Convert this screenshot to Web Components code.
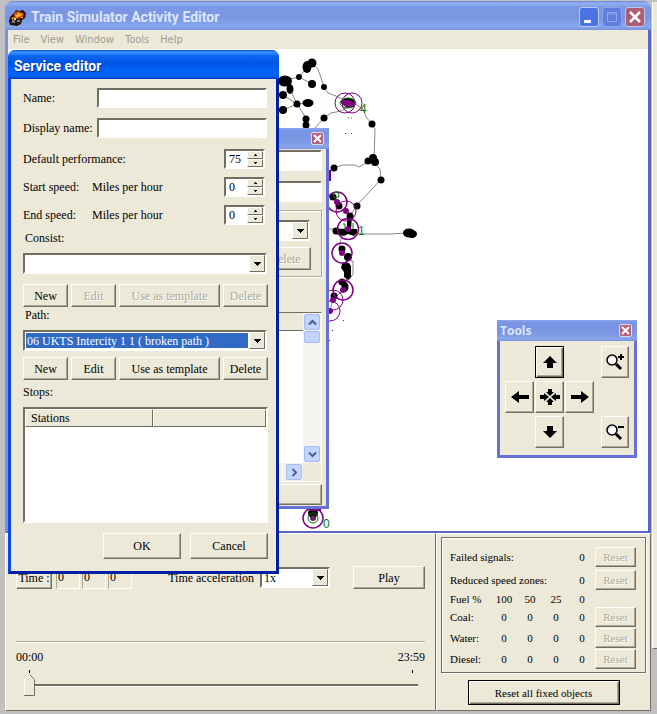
<!DOCTYPE html>
<html lang="en">
<head>
<meta charset="utf-8">
<title>Train Simulator Activity Editor</title>
<style>
html,body{margin:0;height:100%}
body{background:#c0c0c0;font:12px/14px "Liberation Serif",serif;color:#000;overflow:hidden;
 --face:#ece9d8;--shade:#716f64;--mid:#aca899;--blue:#316ac5}
</style>
</head>
<body>
<editor-desktop></editor-desktop>
<script>
const define = (name, html, setup) => customElements.define(name, class extends HTMLElement {
  constructor() {
    super();
    const t = document.createElement('template');
    t.innerHTML = typeof html === 'function' ? html(this) : html;
    this.attachShadow({mode: 'open'}).appendChild(t.content.cloneNode(true));
    if (setup) setup(this, this.shadowRoot);
  }
});

/* Push button */
define('xp-button', el => `
<style>
:host{display:block}
button{box-sizing:border-box;width:100%;height:100%;margin:0;padding:0;font:inherit;color:inherit;background:var(--face);
 border:1px solid;border-color:#fff var(--shade) var(--shade) #fff;box-shadow:inset -1px -1px var(--mid);border-radius:0;
 display:flex;align-items:center;justify-content:center;white-space:nowrap}
button:disabled{color:var(--mid);text-shadow:1px 1px #fff}
:host([default]) button{border-color:#000;box-shadow:inset 1px 1px #fff,inset -1px -1px var(--shade),inset -2px -2px var(--mid)}
</style>
<button type="button" ${el.hasAttribute('disabled') ? 'disabled' : ''} ${el.hasAttribute('label') ? `aria-label="${el.getAttribute('label')}"` : ''}><slot></slot></button>`);

/* Labelled text box */
define('xp-field', el => `
<style>
:host{display:flex;align-items:center;height:20px}
label{flex:0 0 74px;white-space:nowrap}
:host([bare]) label{display:none}
input{box-sizing:border-box;flex:1;min-width:0;height:100%;margin:0;padding:0 3px;font:inherit;background:#fff;border-radius:0;outline:0;
 border:2px solid;border-color:var(--shade) #fff #fff var(--shade)}
</style>
<label for="i">${el.getAttribute('label')}</label><input id="i" type="text" aria-label="${el.getAttribute('label')}">`);

/* Labelled number box with up and down buttons */
define('xp-spin', el => `
<style>
:host{display:flex;align-items:center;height:20px}
label{flex:0 0 69px;white-space:nowrap}
.unit{flex:1;white-space:nowrap}
.box{box-sizing:border-box;width:41px;height:20px;margin-right:3px;display:flex;background:#fff;border:2px solid;border-color:var(--shade) #fff #fff var(--shade)}
input{appearance:textfield;flex:1;min-width:0;margin:0;padding:0 0 0 3px;border:0;outline:0;font:inherit;background:none}
input::-webkit-inner-spin-button{appearance:none;margin:0}
.arrows{width:16px;display:grid;grid-template-rows:1fr 1fr}
button{margin:0;padding:0;min-height:0;background:var(--face);border:1px solid;border-color:#fff var(--shade) var(--shade) #fff;border-radius:0;display:flex;align-items:center;justify-content:center}
svg{display:block;width:3px;height:2px}
</style>
<label for="i">${el.getAttribute('label')}</label><span class="unit">${el.getAttribute('unit') || ''}</span>
<span class="box"><input id="i" type="number" value="${el.getAttribute('value')}"><span class="arrows">
<button type="button" aria-label="Increase"><svg viewBox="0 0 3 2"><path d="M1 0h1v1h1v1H0V1h1z"/></svg></button>
<button type="button" aria-label="Decrease"><svg viewBox="0 0 3 2"><path d="M0 0h3v1H2v1H1V1H0z"/></svg></button></span></span>`,
(el, root) => {
  const input = root.querySelector('input'), [up, down] = root.querySelectorAll('button');
  up.onclick = () => input.stepUp();
  down.onclick = () => input.stepDown();
});

/* Drop-down list */
define('xp-select', el => `
<style>
:host{display:block}
:host([inline]){display:flex;align-items:center}
label{display:flex;align-items:center;box-sizing:border-box;white-space:nowrap}
:host([inline]) label{padding-right:6px}
:host([bare]) label{display:none}
.box{box-sizing:border-box;height:21px;display:flex;background:#fff;border:2px solid;border-color:var(--shade) #fff #fff var(--shade)}
:host([inline]) .box{width:70px}
select{appearance:none;flex:1;min-width:0;margin:1px;padding:0 1px;border:0;outline:0;border-radius:0;font:inherit;color:inherit;background:#fff}
:host([picked]) select{background:var(--blue);color:#fff}
.drop{box-sizing:border-box;width:16px;pointer-events:none;background:var(--face);border:1px solid;border-color:#fff var(--shade) var(--shade) #fff;display:flex;align-items:center;justify-content:center}
</style>
<label part="label" for="s">${el.getAttribute('label')}</label>
<div class="box"><select id="s" aria-label="${el.getAttribute('label')}"><option>${el.getAttribute('value') || ''}</option></select><span class="drop"><svg width="7" height="4" viewBox="0 0 7 4"><path d="M0 0h7v1H6v1H5v1H4v1H3V3H2V2H1V1H0z"/></svg></span></div>`);

/* Framed window with a title bar */
define('xp-window', el => `
<style>
:host{display:flex;flex-direction:column;box-sizing:border-box;border:3px solid #6570d8;border-top:0;background:var(--face);--bar:linear-gradient(#8ba4ec,#7894e4 15%,#7b96e2 60%,#86a6ec 90%,#7d90dc)}
:host([active]){border-color:#0a43e4 #001fa4 #001fa4 #0844e8;border-radius:8px 8px 0 0;--bar:linear-gradient(#0b54c8,#3d95ff 8%,#0a67f2 20%,#0054e3 45%,#0062f8 70%,#0361f0 90%,#0140c8)}
header{flex:none;box-sizing:border-box;height:21px;margin:0 -3px;padding:0 5px 0 3px;display:flex;align-items:center;background:var(--bar);color:#dce6fa;font:bold 12px/14px "Open Sans",sans-serif}
:host([active]) header{height:29px;padding:3px 6px 0;border-radius:7px 7px 0 0;color:#fff;font:bold 14px/18px Roboto,sans-serif;text-shadow:1px 1px #0a2a88}
span{flex:1;white-space:nowrap}
button{width:13px;height:13px;padding:0;border:1px solid #e0d8f0;border-radius:2px;background:#b4627a;display:flex;align-items:center;justify-content:center}
:host([active]) button{display:none}
main{flex:1;min-height:0;display:flex;flex-direction:column}
</style>
<header><span>${el.getAttribute('title-text') || ''}</span><button type="button" aria-label="Close"><svg width="9" height="9" viewBox="0 0 9 9"><path d="M1 1l7 7M8 1L1 8" stroke="#fff" stroke-width="2"/></svg></button></header>
<main><slot></slot></main>`);

/* Service editor form */
define('service-editor', `
<style>
:host{display:block;padding:9px 8px 12px 12px}
xp-field{margin-right:1px;margin-bottom:10px}
xp-spin{margin-bottom:8px}
.gap{margin-top:11px}
.last{margin-bottom:0}
.pick{margin-right:1px}
.pick::part(label){height:23px;padding:0 0 7px 2px}
.consist::part(label){height:28px;padding-bottom:2px}
.row{display:grid;grid-template-columns:45px 45px 1fr 45px;grid-auto-rows:23px;gap:3px}
.row.a{margin-top:10px}.row.b{margin-top:6px}
h2{margin:0;height:27px;font:inherit;line-height:25px}
.list{box-sizing:border-box;height:116px;background:#fff;border:2px solid;border-color:var(--shade) #fff #fff var(--shade)}
table{width:100%;border-collapse:separate;border-spacing:0}
th{box-sizing:border-box;height:18px;padding:0 5px;font-weight:normal;text-align:left;background:var(--face);border:1px solid;border-color:#fff var(--shade) var(--shade) #fff}
th:first-child{width:128px}
.end{display:flex;justify-content:flex-end;gap:9px;margin-top:10px}
.end xp-button{width:78px;height:26px}
</style>
<xp-field label="Name:"></xp-field>
<xp-field label="Display name:"></xp-field>
<xp-spin class="gap" label="Default performance:" value="75"></xp-spin>
<xp-spin label="Start speed:" unit="Miles per hour" value="0"></xp-spin>
<xp-spin class="last" label="End speed:" unit="Miles per hour" value="0"></xp-spin>
<xp-select class="pick consist" label="Consist:"></xp-select>
<div class="row a"><xp-button>New</xp-button><xp-button disabled>Edit</xp-button><xp-button disabled>Use as template</xp-button><xp-button disabled>Delete</xp-button></div>
<xp-select class="pick" picked label="Path:" value="06 UKTS Intercity 1 1 ( broken path )"></xp-select>
<div class="row b"><xp-button>New</xp-button><xp-button>Edit</xp-button><xp-button>Use as template</xp-button><xp-button>Delete</xp-button></div>
<h2>Stops:</h2>
<div class="list"><table><thead><tr><th>Stations</th><th></th></tr></thead></table></div>
<div class="end"><xp-button>OK</xp-button><xp-button>Cancel</xp-button></div>`);

/* Dialog that lies behind the service editor */
define('back-form', `
<style>
:host{flex:1;display:flex;flex-direction:column;padding:1px 4px 1px 8px}
xp-field{height:21px;margin-bottom:10px}
.group{box-sizing:border-box;height:67px;margin-top:-2px;padding:9px 10px 0 8px;border:1px solid var(--mid);box-shadow:1px 1px #fff,inset 1px 1px #fff}
.group xp-button{width:52px;height:23px;margin:6px 0 0 auto}
.group xp-select{margin-right:1px}
.list{box-sizing:border-box;flex:1;margin-top:35px;display:grid;grid-template:18px 1fr 18px/1fr 18px;background:#fff;border:1px solid;border-color:var(--shade) #fff #fff var(--shade)}
.head{background:var(--face);border-bottom:1px solid var(--shade)}
.v{grid-area:1/2/3/3;background:#f4f3ee;display:flex;flex-direction:column;padding:1px}
.v i{height:10px;margin-top:1px;border:1px solid #a4bcf4;border-radius:2px;background:#c4d5fd}
.v button:last-child{margin-top:auto}
.h{grid-area:3/1;background:#f4f3ee;display:flex;justify-content:flex-end;padding:1px}
.c{grid-area:3/2;background:var(--face)}
.list button{box-sizing:border-box;flex:none;width:16px;height:16px;padding:0;border:1px solid #a4bcf4;border-radius:2px;background:#c4d5fd;display:flex;align-items:center;justify-content:center}
path{fill:none;stroke:#4d6185;stroke-width:2}
.foot{height:21px;margin-top:2px}
</style>
<xp-field bare label="Activity name"></xp-field><xp-field bare label="Activity title"></xp-field>
<div class="group"><xp-select bare label="Service"></xp-select><xp-button disabled>Delete</xp-button></div>
<div class="list"><div class="head"></div>
<div class="v"><button type="button" aria-label="Scroll up"><svg width="9" height="7"><path d="M1 5.500l3.500-3.500L8 5.500"/></svg></button><i></i><button type="button" aria-label="Scroll down"><svg width="9" height="7"><path d="M1 1.500L4.500 5 8 1.500"/></svg></button></div>
<div></div><div class="h"><button type="button" aria-label="Scroll right"><svg width="7" height="9"><path d="M1.500 1L5 4.500 1.500 8"/></svg></button></div><div class="c"></div></div>
<xp-button class="foot"></xp-button>`);

/* Map navigation tools */
define('nav-tools', `
<style>
:host{display:grid;grid-template-columns:29px 29px 29px 1fr 28px;grid-auto-rows:32px;gap:3px 1px;padding:5px 5px 7px}
</style>
<xp-button default label="Up" style="grid-area:1/2"><svg width="16" height="16"><path d="M8 2l7 7h-4v5H5V9H1z"/></svg></xp-button>
<xp-button label="Zoom in" style="grid-area:1/5"><svg width="20" height="20"><circle cx="7" cy="8" r="5" fill="#fff" stroke="#000" stroke-width="1.500"/><path d="M4 7a3 3 0 013-3" fill="none" stroke="#bbb"/><path d="M11 12l5 5" stroke="#000" stroke-width="3"/><path d="M13 5h6M16 2v6" stroke="#000" stroke-width="2"/></svg></xp-button>
<xp-button label="Left" style="grid-area:2/1"><svg width="20" height="14"><path d="M1 7l8-6v4h10v4H9v4z"/></svg></xp-button>
<xp-button label="Centre" style="grid-area:2/2"><svg width="22" height="18"><path d="M9 1h4v3h2l-4 4-4-4h2zM9 17h4v-3h2l-4-4-4 4h2zM1 7h4V5l5 4-5 4v-2H1zM21 7h-4V5l-5 4 5 4v-2h4z"/></svg></xp-button>
<xp-button label="Right" style="grid-area:2/3"><svg width="20" height="14"><path d="M19 7l-8-6v4H1v4h10v4z"/></svg></xp-button>
<xp-button label="Down" style="grid-area:3/2"><svg width="16" height="16"><path d="M8 14l7-7h-4V2H5v5H1z"/></svg></xp-button>
<xp-button label="Zoom out" style="grid-area:3/5"><svg width="20" height="20"><circle cx="7" cy="8" r="5" fill="#fff" stroke="#000" stroke-width="1.500"/><path d="M4 7a3 3 0 013-3" fill="none" stroke="#bbb"/><path d="M11 12l5 5" stroke="#000" stroke-width="3"/><path d="M13 5h6" stroke="#000" stroke-width="2"/></svg></xp-button>`);

/* Route map; nodes are placed by their coordinates on the canvas */
define('route-map', `
<style>
:host{display:block;position:relative;background:#fff;overflow:hidden}
svg{position:absolute;left:262px;top:1px}
.l{fill:none;stroke:#888}
.r{fill:none;stroke:#800080}
.w{stroke-width:1.500}
.g{fill:none;stroke:#008000}
text{font:12px "Liberation Sans",sans-serif;fill:#008000}
.p{fill:#800080}
</style>
<svg width="160" height="480" viewBox="270 50 160 480" aria-label="Route map">
<g class="l"><path d="M312 62l6 7 6 18 4 6 8 3 12 6M270 84l15-4 14-3 13 7M299 77l8-10M285 81l5 8 7 15 9 14v10M283 95l14 9 11-1M270 113l13-3 14-6M315 128l9-10 7-5 10-2 10-6M355 104l8 5 3 8 6 7 3 5-1 31M328 172l6-4 9-3 12 0 4 2 7-4 6-3 8 9 1 10-8 9-16 17-7 11M328 229h20l12 5h30l18-1M350 261h3v13l-4 6M342 235l-3 13M347 278l-4 12-10 10-4 14"/></g>
<g>
<ellipse cx="307" cy="67" rx="4.500" ry="6"/><circle cx="312" cy="63" r="4.500"/><circle cx="299" cy="77" r="3"/><circle cx="312" cy="84" r="4"/><circle cx="324" cy="87" r="3"/>
<ellipse cx="285" cy="81" rx="7" ry="5.500"/><ellipse cx="290" cy="89" rx="3.500" ry="5"/><circle cx="283" cy="95" r="4"/><circle cx="297" cy="104" r="3.500"/><ellipse cx="308" cy="103" rx="5.500" ry="4"/><circle cx="283" cy="110" r="4"/><circle cx="306" cy="119" r="3.500"/><circle cx="306" cy="125" r="3.500"/><circle cx="324" cy="118" r="3.500"/>
<ellipse cx="348" cy="102" rx="7" ry="4"/><circle cx="372" cy="124" r="3.500"/><circle cx="368" cy="161" r="3.500"/><circle cx="373" cy="158" r="4"/><circle cx="375" cy="162" r="4"/><circle cx="381" cy="180" r="3.500"/><circle cx="334" cy="168" r="3.500"/>
<circle cx="333" cy="197" r="3.500"/><circle cx="339" cy="206" r="3.500"/><circle cx="357" cy="206" r="3.500"/><circle cx="350" cy="216" r="3.500"/><circle cx="336" cy="231" r="3.500"/><path d="M336 229h12l9 0v4l-3 3-6-2-4 2-8-2z"/><path d="M347 216h5l-1 14h-4z"/>
<circle cx="342" cy="249" r="3.500"/><circle cx="348" cy="257" r="4"/><path d="M342 264l3-2 4 1 2 3v11l-3 3-4-3 0-5-3-4z"/><circle cx="342" cy="282" r="3.500"/><ellipse cx="345" cy="287" rx="3.500" ry="5"/><circle cx="334" cy="296" r="3.500"/><ellipse cx="409" cy="233" rx="6" ry="4.500"/><ellipse cx="412" cy="234" rx="5" ry="4"/>
<circle cx="313" cy="513" r="5"/>
</g>
<g class="p"><path d="M342 100h7l6 3-1 4-7 1-5-4z"/><circle cx="337" cy="202" r="3"/><circle cx="346" cy="211" r="3"/><circle cx="348" cy="229" r="3"/><circle cx="342" cy="253" r="3"/><circle cx="343" cy="290" r="3"/><circle cx="333" cy="300" r="3"/><circle cx="330" cy="311" r="3"/><circle cx="313" cy="518" r="3"/><path d="M309 508h12v3h-12zM328 170h3v11h-3zM345 133h1v1h-1zM351 133h1v1h-1zM343 320h1v1h-1zM332 330h1v1h-1zM329 340h1v1h-1z"/></g>
<g class="r"><circle cx="345" cy="103" r="10"/><circle cx="352" cy="103" r="10"/><circle class="w" cx="337" cy="202" r="10"/><circle cx="346" cy="211" r="10"/><circle class="w" cx="348" cy="229" r="10.500"/><circle class="w" cx="342" cy="253" r="10"/><circle class="w" cx="343" cy="290" r="10"/><circle cx="333" cy="300" r="10"/><circle cx="330" cy="311" r="10"/><circle class="w" cx="313" cy="518" r="10"/></g>
<g class="g"><ellipse cx="348" cy="103" rx="8" ry="5"/><circle cx="336" cy="195" r="3"/><path d="M343 224h2v6M353 223v6M348 118h1M351 118h1"/><circle cx="313" cy="518" r="5"/><circle cx="313" cy="518" r="1"/></g>
<text x="360" y="113">4</text><text x="358" y="235">1</text><text x="323" y="528">0</text>
</svg>`);

/* Time controls */
define('time-panel', `
<style>
:host{display:flex;flex-direction:column;box-sizing:border-box;padding:32px 10px 0;background:var(--face);border:1px solid;border-color:#fff var(--shade) var(--shade) #fff}
.row{display:flex;align-items:center}
.row>xp-button{height:23px}
.set{width:36px;margin-right:4px}
output{box-sizing:border-box;width:24px;height:22px;margin-right:2px;padding:2px 1px;border:1px solid;border-color:var(--mid) #fff #fff var(--mid)}
.acc{margin-left:auto;margin-right:23px}
.play{width:72px}
hr{width:100%;box-sizing:border-box;margin:52px 0 7px;border:0;border-top:1px solid var(--mid);border-bottom:1px solid #fff}
.ends{display:flex;justify-content:space-between}
.ticks{display:flex;justify-content:space-between;margin:6px 12px 0 13px}
.ticks i{width:1px;height:3px;background:#000}
input{appearance:none;width:auto;height:22px;margin:1px 7px 0 8px;background:linear-gradient(var(--shade),var(--shade)) 0 10px/100% 2px no-repeat,linear-gradient(#fff,#fff) 0 12px/100% 1px no-repeat}
input::-webkit-slider-thumb{appearance:none;width:11px;height:22px;background:url("data:image/svg+xml,%3Csvg xmlns='http://www.w3.org/2000/svg' width='11' height='22'%3E%3Cpath d='M.5 21.500V5.500l5-5 5 5v16z' fill='%23ece9d8' stroke='%23fff'/%3E%3Cpath d='M5.500.5l5 5v16H0' fill='none' stroke='%23716f64'/%3E%3C/svg%3E")}
</style>
<div class="row"><xp-button class="set">Time :</xp-button><output>0</output><output>0</output><output>0</output><xp-select class="acc" inline label="Time acceleration" value="1x"></xp-select><xp-button class="play">Play</xp-button></div>
<hr><div class="ends"><span>00:00</span><span>23:59</span></div><div class="ticks"><i></i><i></i></div>
<input type="range" aria-label="Time of day" min="0" max="1439" value="0">`);

/* Counters and reset buttons */
define('status-panel', `
<style>
:host{display:flex;flex-direction:column;align-items:center;box-sizing:border-box;padding:3px 4px 0;font-size:11px;background:var(--face);border:1px solid;border-color:#fff var(--shade) var(--shade) #fff}
.frame{box-sizing:border-box;width:100%;padding:7px 9px 3px 8px;border:1px solid var(--shade);box-shadow:inset 1px 1px #fff,1px 1px #fff}
table{width:100%;table-layout:fixed;border-collapse:collapse}
th,td{padding:0;font-weight:normal;text-align:center}
th[scope=row]{text-align:left;white-space:nowrap}
td xp-button{height:20px}
.t1{height:24px}.t2{height:22px}.t3{height:15px}.t4{height:21px}
.all{width:152px;height:25px;margin-top:7px}
</style>
<div class="frame"><table><colgroup><col><col style="width:26px"><col style="width:26px"><col style="width:26px"><col style="width:26px"><col style="width:41px"></colgroup>
<tbody><tr class="t1"><th scope="row" colspan="4">Failed signals:</th><td>0</td><td><xp-button disabled>Reset</xp-button></td></tr>
<tr class="t2"><th scope="row" colspan="4">Reduced speed zones:</th><td>0</td><td><xp-button disabled>Reset</xp-button></td></tr>
<tr class="t3"><th scope="row">Fuel %</th><th>100</th><th>50</th><th>25</th><th>0</th><td></td></tr>
<tr class="t4"><th scope="row">Coal:</th><td>0</td><td>0</td><td>0</td><td>0</td><td><xp-button disabled>Reset</xp-button></td></tr>
<tr class="t4"><th scope="row">Water:</th><td>0</td><td>0</td><td>0</td><td>0</td><td><xp-button disabled>Reset</xp-button></td></tr>
<tr class="t4"><th scope="row">Diesel:</th><td>0</td><td>0</td><td>0</td><td>0</td><td><xp-button disabled>Reset</xp-button></td></tr></tbody></table></div>
<xp-button class="all" default>Reset all fixed objects</xp-button>`);

/* Title bar and menu of the main window */
define('editor-head', `
<style>
:host{display:block}
header{box-sizing:border-box;height:29px;display:flex;align-items:center;gap:3px;padding:3px 6px 0 4px;border-radius:8px 8px 0 0;
 background:linear-gradient(#6f82d8,#92b2f2 8%,#7c98e4 22%,#7b96e2 60%,#86a8ee 88%,#7a90dc);color:#dce6fa;font:bold 14px/18px Roboto,sans-serif}
span{flex:1;margin-left:2px;white-space:nowrap}
header button{box-sizing:border-box;width:20px;height:20px;padding:0;border:1px solid #b9c8f4;border-radius:3px;background:#4a73e4;display:flex}
header .max{background:#6180de;border-color:#8da4ea}
header .x{background:#b25c70}
nav{height:19px;display:flex;gap:11px;padding:0 5px;background:var(--face);border-left:3px solid #7b8fe0;border-right:3px solid #5a62cc}
nav button{border:0;padding:0;background:none;color:#9f9c8b;font:11px/18px "DejaVu Sans Condensed","DejaVu Sans",sans-serif}
</style>
<header><svg width="17" height="17" viewBox="0 0 17 17"><path fill="#20160a" d="M1 8l4-4 2-3 3 1 4-1 3 3-1 5-3 2-1 4-4 2-7-1-1-4z"/><path fill="#c63a10" d="M5 4l3-2 4 1 3 2-1 3-5 2-4-1z"/><path fill="#f5b921" d="M6 5l2 1 1-3 2 2 3-1-2 3-3 1-2 1zM2 9l3-1-1 3z"/><path fill="#777c86" d="M3 11h3v3H3zM8 11h3v2H8z"/><path fill="#e8d088" d="M5 9h2v2H5zM12 8h2v1h-2z"/></svg><span>Train Simulator Activity Editor</span>
<button type="button" aria-label="Minimize"><svg width="18" height="18"><path fill="#fff" d="M4 12h7v3H4z"/></svg></button>
<button type="button" class="max" aria-label="Maximize" disabled><svg width="18" height="18"><path fill="none" stroke="#8fa6ee" d="M4.500 4.500h9v9h-9zM4 6h10"/></svg></button>
<button type="button" class="x" aria-label="Close"><svg width="18" height="18"><path stroke="#fff" stroke-width="2.500" d="M4 4l10 10M14 4L4 14"/></svg></button></header>
<nav><button type="button">File</button><button type="button">View</button><button type="button">Window</button><button type="button">Tools</button><button type="button">Help</button></nav>`);

/* Desktop with the main window and the windows floating over it */
define('editor-desktop', `
<style>
:host{display:grid;grid-template-columns:1fr 6px;height:100vh;position:relative;overflow:hidden}
.app{display:flex;flex-direction:column;margin:1px 0 3px 5px;min-width:0}
route-map{flex:1;border:3px solid #7b8fe0;border-width:0 3px 2px;border-color:#5a62cc #5a62cc #5a62cc #7b8fe0}
.dock{display:grid;grid-template-columns:1fr 215px;height:178px}
.side{background:var(--face);border-left:1px solid #fff;border-bottom:1px solid var(--shade);margin:2px 0 65px 1px}
xp-window{position:absolute}
.back{left:180px;top:128px;width:149px;height:381px}
.tools{left:497px;top:320px;width:140px}
.service{left:8px;top:50px;width:271px}
</style>
<div class="app"><editor-head></editor-head><route-map></route-map><div class="dock"><time-panel></time-panel><status-panel></status-panel></div></div>
<div class="side"></div>
<xp-window class="back"><back-form></back-form></xp-window>
<xp-window class="tools" title-text="Tools"><nav-tools></nav-tools></xp-window>
<xp-window class="service" active title-text="Service editor"><service-editor></service-editor></xp-window>`);
</script>
</body>
</html>
